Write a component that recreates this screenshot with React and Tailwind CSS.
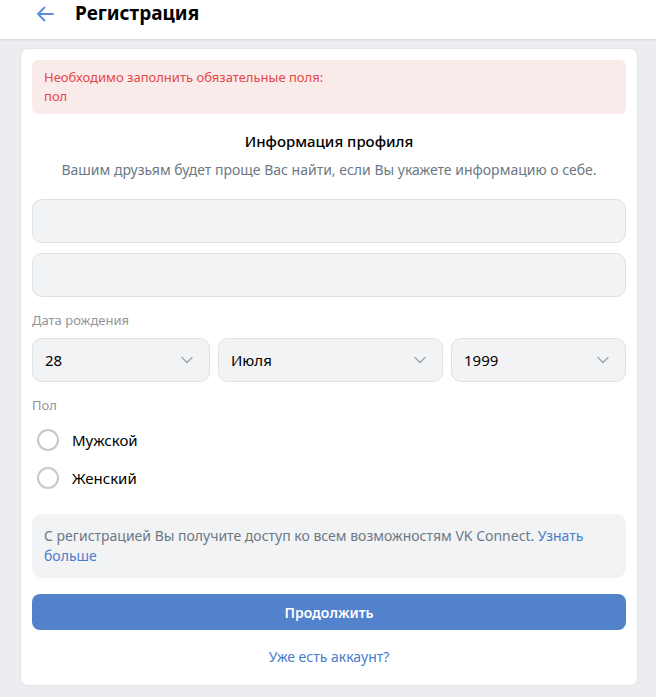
import { ChevronDown } from 'lucide-react'

const font = { fontFamily: '"Segoe UI", "Noto Sans", Roboto, sans-serif' }

function Select({ value, className }) {
  return (
    <div
      className={`flex h-[44px] items-center justify-between rounded-[10px] border border-[#dce1e6] bg-[#f2f3f5] pl-3 pr-3 text-[15px] text-black ${className}`}
    >
      <span>{value}</span>
      <ChevronDown size={20} strokeWidth={1.5} className="text-[#99a2ad]" />
    </div>
  )
}

function Radio({ label }) {
  return (
    <label className="flex h-[38px] items-center gap-[13px] pl-[5px]">
      <span className="block h-[22px] w-[22px] rounded-full border-2 border-[#c4c8cc]" />
      <span className="text-[15px] text-black">{label}</span>
    </label>
  )
}

export default function App() {
  return (
    <div className="min-h-[697px] bg-[#ebedf0]" style={font}>
      <header className="flex h-[39px] items-start bg-white shadow-[0_1px_2px_rgba(0,0,0,0.12)]">
        <div className="flex items-center pl-[35px] pt-[1px]">
          <svg width="20" height="20" viewBox="0 0 20 20" className="mt-[1px]">
            <path d="M18 10H3M9.5 3.5 3 10l6.5 6.5" fill="none" stroke="#5b8ddd" strokeWidth="1.8" strokeLinecap="round" strokeLinejoin="round" />
          </svg>
          <h1 className="ml-[20px] text-[19px] font-bold leading-[24px] text-black">Регистрация</h1>
        </div>
      </header>

      <div className="pl-[20px] pr-[18px] pt-[9px] pb-[12px]">
        <div className="rounded-[8px] border border-[#e3e4e8] bg-white px-[11px] pt-[11px] pb-[18px]">
          <div className="rounded-[6px] bg-[#faebeb] px-[12px] py-[8px] text-[13px] leading-[19px] text-[#e64646]">
            <div>Необходимо заполнить обязательные поля:</div>
            <div>пол</div>
          </div>

          <div className="pt-[16px] text-center">
            <div className="text-[15px] font-medium leading-[22px] text-black">Информация профиля</div>
            <div className="mt-[8px] text-[14px] leading-[20px] text-[#6d7885]">
              Вашим друзьям будет проще Вас найти, если Вы укажете информацию о себе.
            </div>
          </div>

          <div className="mt-[19px] flex flex-col gap-[10px]">
            <div className="h-[44px] rounded-[10px] border border-[#dce1e6] bg-[#f2f3f5]" />
            <div className="h-[44px] rounded-[10px] border border-[#dce1e6] bg-[#f2f3f5]" />
          </div>

          <div className="mt-[13px] text-[13px] leading-[20px] text-[#909499]">Дата рождения</div>
          <div className="mt-[8px] flex gap-[8px]">
            <Select value="28" className="w-[178px]" />
            <Select value="Июля" className="w-[225px]" />
            <Select value="1999" className="flex-1" />
          </div>

          <div className="mt-[13px] text-[13px] leading-[20px] text-[#909499]">Пол</div>
          <div className="mt-[6px] flex flex-col">
            <Radio label="Мужской" />
            <Radio label="Женский" />
          </div>

          <div className="mt-[17px] rounded-[10px] bg-[#f2f3f5] px-[12px] py-[12px] text-[14px] leading-[20px] text-[#6d7885]">
            С регистрацией Вы получите доступ ко всем возможностям VK Connect.{' '}
            <a className="text-[#4a7ccc]">Узнать больше</a>
          </div>

          <button className="mt-[16px] flex h-[36px] w-full items-center justify-center rounded-[8px] bg-[#5282cc] text-[14px] font-semibold text-white">
            Продолжить
          </button>

          <div className="mt-[17px] text-center text-[14px] leading-[20px] text-[#4a7ccc]">Уже есть аккаунт?</div>
        </div>
      </div>
    </div>
  )
}
